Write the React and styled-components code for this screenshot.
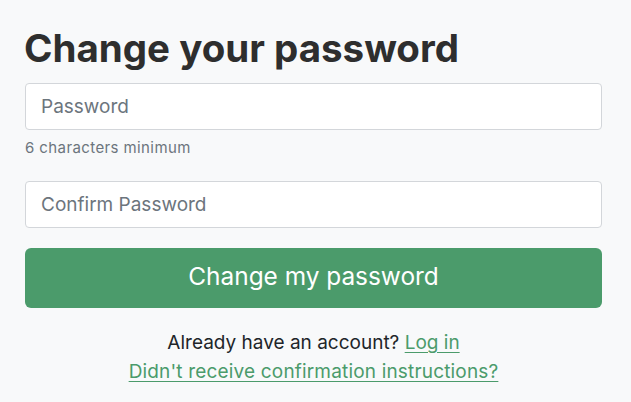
import styled, { createGlobalStyle } from 'styled-components';

const GlobalStyle = createGlobalStyle`
  * { box-sizing: border-box; }
  body {
    margin: 0;
    background: #f8f9fa;
    font-family: 'Inter', 'Liberation Sans', sans-serif;
    color: #212529;
  }
`;

const Page = styled.div`
  padding: 25px 29px 25px 25px;
`;

const Form = styled.form`
  display: flex;
  flex-direction: column;
`;

const Title = styled.h1`
  margin: 0 0 12px -1px;
  font-size: 38.5px;
  line-height: 46px;
  font-weight: 700;
  color: #2e2e2e;
`;

const Field = styled.input`
  display: block;
  width: 100%;
  height: 47px;
  padding: 0 15px;
  border: 1px solid #d3d6da;
  border-radius: 4px;
  background: #fff;
  font-family: inherit;
  font-size: 19px;
  color: #212529;
  outline: none;

  &::placeholder {
    color: #6c757d;
  }
`;

const Hint = styled.small`
  display: block;
  margin: 8px 0 23px;
  font-size: 15px;
  line-height: 20px;
  letter-spacing: 0.4px;
  color: #6c757d;
`;

const SubmitButton = styled.button`
  margin-top: 20px;
  height: 60px;
  padding: 0 0 5px;
  border: none;
  border-radius: 6px;
  background: #4b9b6b;
  color: #fff;
  font-family: inherit;
  font-size: 24.4px;
  font-weight: 400;
  cursor: pointer;
`;

const Footer = styled.div`
  margin-top: 20px;
  display: flex;
  flex-direction: column;
  align-items: center;
  font-size: 19px;
  line-height: 29px;
`;

const Line = styled.div`
  white-space: nowrap;
  letter-spacing: ${p => (p.$wide ? '0.17px' : '0')};
`;

const Link = styled.a`
  color: #4b9b6b;
  text-decoration: underline;
  text-underline-offset: 3px;
`;

export default function App() {
  return (
    <>
      <GlobalStyle />
      <Page>
        <Form onSubmit={e => e.preventDefault()}>
          <Title>Change your password</Title>
          <Field type="password" placeholder="Password" />
          <Hint>6 characters minimum</Hint>
          <Field type="password" placeholder="Confirm Password" />
          <SubmitButton type="submit">Change my password</SubmitButton>
        </Form>
        <Footer>
          <Line>
            Already have an account? <Link href="#">Log in</Link>
          </Line>
          <Line $wide>
            <Link href="#">Didn't receive confirmation instructions?</Link>
          </Line>
        </Footer>
      </Page>
    </>
  );
}
